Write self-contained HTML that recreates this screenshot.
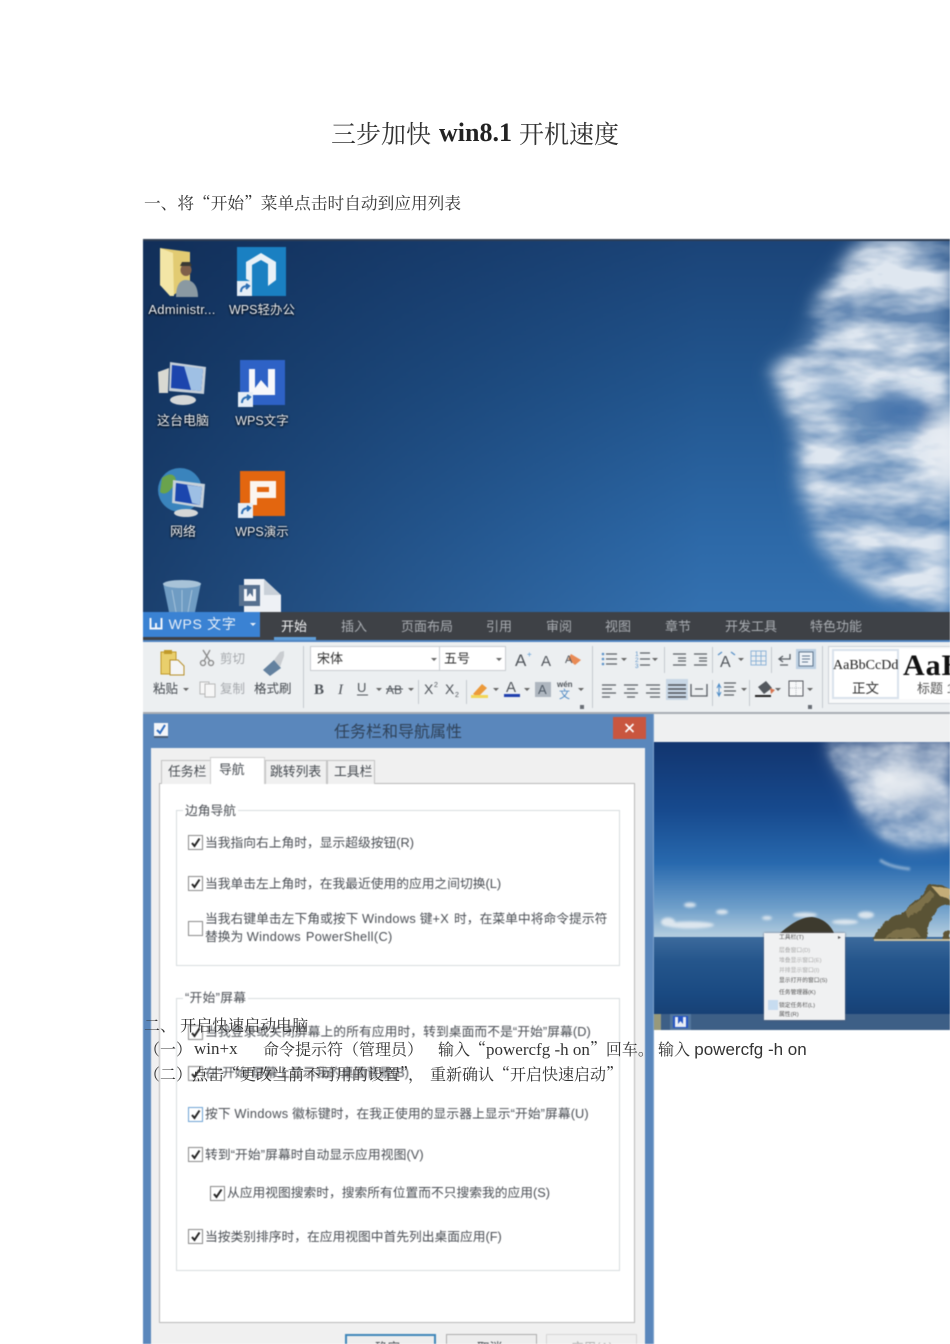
<!DOCTYPE html>
<html lang="zh"><head><meta charset="utf-8"><title>三步加快 win8.1 开机速度</title>
<style>
html,body{margin:0;padding:0;background:#fff}
#p{position:relative;width:950px;height:1344px;overflow:hidden;background:#fff}
#im{position:absolute;left:143px;top:239px;width:807px;height:1105px;overflow:hidden;filter:blur(.45px)}
.a{position:absolute}
.t{position:absolute;white-space:nowrap;font:13px/16px "Liberation Sans","Noto Sans CJK SC",sans-serif;color:#454a50}
.s{position:absolute;white-space:nowrap;font:17px/20px "Liberation Serif","Noto Serif CJK SC",serif;color:#333}
.q{font-family:"Noto Serif CJK SC",serif;font-size:16px}
.d{color:#eef1f5;text-align:center;width:90px;text-shadow:0 1px 2px #000,0 0 2px #0009}
.l{font-size:12.75px;color:#4b4f55}
.w{letter-spacing:.35px;word-spacing:1px}
.cb{position:absolute;width:13px;height:13px;border:1px solid #8b8b8b;background:#fff}
.cb svg{position:absolute;left:1px;top:1px}
.tab{position:absolute;background:#f0f0f0;border:1px solid #c4c4c4;border-bottom:0;box-sizing:border-box}
.sep{position:absolute;width:1px;background:#c5cacf}
.ar{position:absolute;width:0;height:0;border:3px solid transparent;border-top:3px solid #666;border-bottom:0}
.gb{position:absolute;left:33px;width:444px;border:1px solid #d8dcdf;box-sizing:border-box}
.bt{position:absolute;top:1095px;height:20px;width:91px;background:#ededed;border:1px solid #adadad;box-sizing:border-box}
</style></head><body><div id="p">
<div class="a" style="left:331px;top:116px;white-space:nowrap;font:25px/34px 'Noto Serif CJK SC',serif;color:#333">三步加快</div>
<div class="a" style="left:439px;top:116px;white-space:nowrap;font:bold 26px/34px 'Liberation Serif',serif;color:#222">win8.1</div>
<div class="a" style="left:519px;top:116px;white-space:nowrap;font:25px/34px 'Noto Serif CJK SC',serif;color:#333">开机速度</div>
<div class="s" style="left:144px;top:192px"><span class="q" style="font-size:16.700px">一、将“开始”菜单点击时自动到应用列表</span></div>

<div id="im">
<!-- Desktop wallpaper -->
<div class="a" style="left:0;top:0;width:807px;height:374px;background:linear-gradient(180deg,#1b4478 0,#22568f 40%,#2d69a8 80%,#3471b0 100%)"></div>
<div class="a" style="left:0;top:0;width:560px;height:374px;background:linear-gradient(90deg,rgba(12,34,70,.62) 0,rgba(12,34,70,.32) 45%,rgba(12,34,70,0) 100%)"></div>
<svg class="a" style="left:0;top:0" width="807" height="374" viewBox="143 239 807 374">
<defs>
<filter id="w" x="-30%" y="-30%" width="160%" height="160%" color-interpolation-filters="sRGB"><feTurbulence type="fractalNoise" baseFrequency=".012 .03" numOctaves="4" seed="11" result="n"/><feColorMatrix in="n" type="matrix" values="0 0 0 0 1 0 0 0 0 1 0 0 0 0 1 2.4 0 0 0 -.62" result="m"/><feGaussianBlur in="SourceGraphic" stdDeviation="8" result="b"/><feComposite in="b" in2="m" operator="in"/></filter>
<filter id="c2" x="-30%" y="-30%" width="160%" height="160%"><feGaussianBlur stdDeviation="9"/></filter>
<filter id="c4" x="-30%" y="-30%" width="160%" height="160%"><feGaussianBlur stdDeviation="12"/></filter>
<filter id="c3" x="-30%" y="-30%" width="160%" height="160%" color-interpolation-filters="sRGB"><feTurbulence type="fractalNoise" baseFrequency=".018 .03" numOctaves="4" seed="3" result="n"/><feColorMatrix in="n" type="matrix" values="0 0 0 0 1 0 0 0 0 1 0 0 0 0 1 2.4 0 0 0 -.55" result="m"/><feGaussianBlur in="SourceGraphic" stdDeviation="4" result="b"/><feComposite in="b" in2="m" operator="in"/></filter>
<filter id="r" x="-10%" y="-10%" width="120%" height="120%"><feTurbulence type="fractalNoise" baseFrequency=".12" numOctaves="3" seed="5" result="n"/><feDisplacementMap in="SourceGraphic" in2="n" scale="4"/></filter>
</defs>
<path d="M865 239H950V612L920 608L880 592L838 565L812 530L800 480L798 430L772 372L808 345L820 300L845 265Z" fill="#7e9fc6" opacity=".75" filter="url(#c4)"/>
<path d="M865 239H950V612L920 608L880 592L838 565L812 530L800 480L798 430L772 372L808 345L820 300L845 265Z" fill="#dfe7f0" filter="url(#w)"/>
<g filter="url(#c2)">
<ellipse cx="948" cy="450" rx="14" ry="46" fill="#eef1f5"/>
<ellipse cx="900" cy="412" rx="28" ry="18" fill="#4272aa" opacity=".85"/>
<ellipse cx="835" cy="392" rx="28" ry="8" fill="#5b88b9" opacity=".7"/>
</g>
</svg>
<div class="a" style="left:0;top:0;width:807px;height:2px;background:#2f3d52"></div>
<!-- Desktop icons -->
<svg class="a" style="left:0;top:0" width="170" height="374" viewBox="143 239 170 374">
<!-- folder -->
<path d="M160 248L190 252L190 284L172 296L160 285Z" fill="#e2cb72"/><path d="M160 248L173 253L174 296L170 296L160 285Z" fill="#f3e6a6"/>
<ellipse cx="186" cy="270" rx="5.500" ry="6" fill="#80604a"/><path d="M180 266H192L190 262H182Z" fill="#3a3a34"/><path d="M176 297C176 285 180 280 186 280C193 280 198 286 198 297Z" fill="#8a99a2"/>
<!-- wps office -->
<rect x="237" y="247" width="49" height="49" fill="#1a80c2"/><path d="M246 262L261 253L276 262L276 280L268 286L268 264L261 260L252 265L252 282L246 279Z" fill="#e9f1f7"/>
<!-- computer -->
<path d="M170 362L206 367L204 394L169 391Z" fill="#c4ced8"/><path d="M172 365L203 369L201 391L171 388Z" fill="#1c45ad"/><path d="M184 366L203 369L201 391L191 390Z" fill="#9fc0e4"/><path d="M158 372L169 368L168 393L159 393Z" fill="#d9d9d2"/><ellipse cx="183" cy="400" rx="13" ry="5" fill="#d5d7d7"/>
<!-- wps W -->
<rect x="240" y="360" width="45" height="45" fill="#2e62c6"/><path d="M249 369V395H275V369H268V388L261 380L255 388V369Z" fill="#f7f8fb"/>
<!-- globe -->
<circle cx="180" cy="490" r="22" fill="#3a84bd"/><path d="M162 478C170 472 176 474 176 482C170 492 165 496 160 492Z" fill="#6aa34c"/><path d="M173 480L205 484L203 508L172 503Z" fill="#c5d0da"/><path d="M176 483L202 487L200 505L175 501Z" fill="#1b46ae"/><path d="M187 485L202 487L200 505L192 503Z" fill="#9dbfe4"/><ellipse cx="186" cy="513" rx="12" ry="4" fill="#d5d7d7"/>
<!-- wps P -->
<rect x="240" y="471" width="45" height="45" fill="#e3660f"/><path d="M250 505V481H276V498H257V505Z" fill="#fbf5ef"/><rect x="257" y="487" width="12" height="5" fill="#e3660f"/>
<!-- recycle -->
<path d="M163 583L201 583L195 612L169 612Z" fill="#6f9cc3"/><ellipse cx="182" cy="584" rx="19" ry="4" fill="#a8c3d8"/><path d="M172 590L176 612M182 590V612M192 590L188 612" stroke="#a3c1da" stroke-width="1"/>
<!-- doc -->
<path d="M244 579H264L281 595V612H244Z" fill="#eef1f5"/><path d="M264 579L281 595H264Z" fill="#c9d0d8"/><rect x="239" y="585" width="21" height="21" fill="#56708f"/><path d="M244 589V601H256V589H253V597L250 593L247 597V589Z" fill="#f4f6f9"/>
<!-- shortcut badges -->
<g fill="#e6eef6"><rect x="237" y="281" width="15" height="15"/><rect x="238" y="392" width="15" height="15"/><rect x="238" y="503" width="15" height="15"/></g>
<g fill="none" stroke="#2c6fb5" stroke-width="2"><path d="M241 292C241 288 243 286 248 286M246 284L249 286L246 289"/><path d="M242 403C242 399 244 397 249 397M247 395L250 397L247 400"/><path d="M242 514C242 510 244 508 249 508M247 506L250 508L247 511"/></g>
</svg>
<div class="t d" style="left:-6px;top:63px;letter-spacing:.25px">Administr...</div>
<div class="t d" style="left:74px;top:63px;font-size:12.500px">WPS轻办公</div>
<div class="t d" style="left:-5px;top:174px">这台电脑</div>
<div class="t d" style="left:74px;top:174px;font-size:12.500px">WPS文字</div>
<div class="t d" style="left:-5px;top:285px">网络</div>
<div class="t d" style="left:74px;top:285px;font-size:12.500px">WPS演示</div>

<!-- dark tab bar -->
<div class="a" style="left:0;top:373px;width:807px;height:28px;background:#3e4146"></div>
<div class="a" style="left:0;top:373px;width:117px;height:25px;background:#3a82d3"></div>
<div class="t" style="left:6px;top:377px;font-size:14px;color:#eaf1f9;letter-spacing:.7px"><svg width="15" height="13" viewBox="0 0 15 13" style="vertical-align:-1px"><path d="M1.500 1V11.500H12.500V1M7 11V6" fill="none" stroke="#f2f6fb" stroke-width="2"/></svg> WPS 文字</div>
<div class="ar" style="left:107px;top:384px;border-top-color:#e8f0fa"></div>
<div class="t" style="left:138px;top:380px;color:#f0f1f2">开始</div>
<div class="t" style="left:198px;top:380px;color:#a9adb2">插入</div>
<div class="t" style="left:258px;top:380px;color:#a9adb2">页面布局</div>
<div class="t" style="left:343px;top:380px;color:#a9adb2">引用</div>
<div class="t" style="left:403px;top:380px;color:#a9adb2">审阅</div>
<div class="t" style="left:462px;top:380px;color:#a9adb2">视图</div>
<div class="t" style="left:522px;top:380px;color:#a9adb2">章节</div>
<div class="t" style="left:582px;top:380px;color:#a9adb2">开发工具</div>
<div class="t" style="left:667px;top:380px;color:#a9adb2">特色功能</div>
<div class="a" style="left:131px;top:398px;width:42px;height:3px;background:#5f9ed8"></div>

<!-- ribbon -->
<div class="a" style="left:0;top:401px;width:807px;height:74px;background:#eceff1;border-top:2px solid #4e84c2;border-bottom:2px solid #a8adb3;box-sizing:border-box"></div>
<svg class="a" style="left:0;top:401px" width="807" height="74" viewBox="143 640 807 74">
<!-- paste -->
<rect x="161" y="652" width="15" height="22" fill="#e9cf6c" stroke="#c19a2a"/><rect x="164" y="650" width="8" height="4" fill="#c19a2a"/><path d="M170 660H178L184 666V675H170Z" fill="#f4f5f6" stroke="#b68e28"/>
<!-- scissors -->
<g stroke="#888" fill="none" stroke-width="1.300"><circle cx="203" cy="663" r="2.500"/><circle cx="211" cy="663" r="2.500"/><path d="M204 661L210 650M210 661L203 650"/></g>
<!-- copy -->
<g stroke="#b8b8b8" fill="#f6f6f6"><rect x="200" y="682" width="9" height="12"/><rect x="205" y="684" width="10" height="13"/></g>
<!-- brush -->
<path d="M263 670L274 660L281 668L270 676Z" fill="#63819f"/><path d="M274 660L280 652L284 651L284 656L280 667Z" fill="#c9ccd0"/>
<!-- bold etc -->
<g font-family="Liberation Serif,serif" fill="#50555b"><text x="314" y="694" font-size="15" font-weight="bold">B</text><text x="338" y="694" font-size="15" font-style="italic">I</text></g>
<g font-family="Liberation Sans,sans-serif" fill="#50555b" font-size="13"><text x="357" y="692">U</text><text x="386" y="694" font-size="12">AB</text><text x="424" y="694" font-size="14">X</text><text x="434" y="687" font-size="7">2</text><text x="445" y="694" font-size="14">X</text><text x="455" y="697" font-size="7">2</text><text x="515" y="666" font-size="17">A</text><text x="527" y="657" font-size="8" fill="#5a9bd5">+</text><text x="541" y="666" font-size="15">A</text></g>
<path d="M357 695H368M386 689H403" stroke="#50555b" stroke-width="1"/>
<!-- eraser -->
<path d="M571 654L581 660L575 665L568 659Z" fill="#e98b56"/><text x="565" y="663" font-family="Liberation Sans,sans-serif" font-size="11" fill="#50555b">A</text>
<!-- highlight -->
<path d="M473 694L482 684L487 688L478 697Z" fill="#ec9a3a"/><rect x="471" y="695" width="17" height="3" fill="#f2d657"/>
<text x="506" y="692" font-family="Liberation Sans,sans-serif" font-size="15" fill="#50555b">A</text><rect x="504" y="694" width="16" height="3" fill="#1f3fae"/>
<rect x="535" y="682" width="16" height="15" fill="#aeb6bf"/><text x="538" y="694" font-family="Liberation Sans,sans-serif" font-size="13" fill="#4f5a66">A</text>
<text x="557" y="687" font-family="Liberation Sans,sans-serif" font-size="8" font-weight="bold" fill="#50555b">wén</text><text x="559" y="698" font-family="Noto Sans CJK SC,sans-serif" font-size="11" fill="#4a86c2">文</text>
<!-- list icons -->
<g stroke="#5b6066" stroke-width="1.300" fill="none">
<path d="M606 654H617M606 659H617M606 664H617M640 653H650M640 659H650M640 665H650"/>
<path d="M673 654H686M678 658H686M678 661H686M673 665H686M694 654H707M699 658H707M699 661H707M694 665H707"/>
<path d="M602 685H616M602 689H612M602 693H616M602 697H610"/>
<path d="M624 685H638M627 689H635M624 693H638M627 697H635"/>
<path d="M646 685H660M650 689H660M646 693H660M650 697H660"/>
<path d="M691 684V696H707V684M693 696H705M695 689H703"/>
<path d="M724 683H736M724 687H734M724 691H736M724 695H734"/>
<path d="M779 659H790V654M783 656L779 659L783 662M780 665H788"/>
</g>
<rect x="666" y="679" width="22" height="21" fill="#bccfe2" opacity=".75"/>
<path d="M668 685H686M668 689H686M668 693H686M668 697H686" stroke="#4e535a" stroke-width="1.500"/>
<g fill="#5d93c9"><circle cx="603" cy="654" r="1.300"/><circle cx="603" cy="659" r="1.300"/><circle cx="603" cy="664" r="1.300"/></g>
<g font-family="Liberation Sans,sans-serif" font-size="6.500" fill="#5d93c9"><text x="635" y="656">1</text><text x="635" y="662">2</text><text x="635" y="668">3</text></g>
<path d="M721 688L719 684L717 688M719 684V696M717 692L719 696L721 692" stroke="#4f8dc8" fill="none"/>
<text x="720" y="667" font-family="Liberation Sans,sans-serif" font-size="16" fill="#50555b">A</text>
<path d="M718 655L722 652M735 655L731 652" stroke="#5d93c9" stroke-width="1.400"/>
<g stroke="#8fb5d8" fill="none"><rect x="751" y="651" width="15" height="14"/><path d="M756 651V665M761 651V665M751 656H766M751 661H766"/></g>
<rect x="796" y="649" width="20" height="20" fill="#bccfe2"/><rect x="799" y="652" width="14" height="14" fill="#eef3f8" stroke="#60778f"/><path d="M802 656H810M802 659H810M802 662H808" stroke="#60778f"/>
<path d="M758 687L766 681L772 688L764 694Z" fill="#53585e"/><path d="M770 688L775 690L771 694Z" fill="#d6744f"/><rect x="755" y="695" width="16" height="2" fill="#222"/>
<rect x="789" y="681" width="14" height="15" fill="#f7f8f9" stroke="#55595f"/><path d="M796 682V695M790 688H802" stroke="#b4b8bd" stroke-dasharray="1 1"/>
<g fill="#6a6f76"><rect x="580" y="705" width="4" height="4"/><rect x="808" y="705" width="4" height="4"/></g>
</svg>
<div class="sep" style="left:160px;top:407px;height:62px"></div>
<div class="sep" style="left:275px;top:441px;height:24px"></div>
<div class="sep" style="left:323px;top:441px;height:24px"></div>
<div class="sep" style="left:449px;top:407px;height:62px"></div>
<div class="sep" style="left:521px;top:408px;height:26px"></div>
<div class="sep" style="left:569px;top:408px;height:26px"></div>
<div class="sep" style="left:628px;top:408px;height:26px"></div>
<div class="sep" style="left:569px;top:441px;height:26px"></div>
<div class="sep" style="left:606px;top:441px;height:26px"></div>
<div class="sep" style="left:679px;top:407px;height:62px"></div>
<div class="t" style="left:10px;top:442px;font-size:12.500px">粘贴</div>
<div class="ar" style="left:40px;top:449px"></div>
<div class="t" style="left:77px;top:412px;font-size:12.500px;color:#a6a9ad">剪切</div>
<div class="t" style="left:77px;top:442px;font-size:12.500px;color:#a6a9ad">复制</div>
<div class="t" style="left:111px;top:442px;font-size:12.500px">格式刷</div>
<div class="a" style="left:167px;top:407px;width:196px;height:25px;background:#fff;border:1px solid #c9cdd1;box-sizing:border-box"></div>
<div class="a" style="left:296px;top:407px;width:1px;height:25px;background:#c9cdd1"></div>
<div class="t" style="left:174px;top:412px;color:#333">宋体</div>
<div class="t" style="left:301px;top:412px;color:#333">五号</div>
<div class="ar" style="left:288px;top:419px"></div>
<div class="ar" style="left:353px;top:419px"></div>
<div class="ar" style="left:233px;top:449px"></div>
<div class="ar" style="left:265px;top:449px"></div>
<div class="ar" style="left:350px;top:449px"></div>
<div class="ar" style="left:381px;top:449px"></div>
<div class="ar" style="left:435px;top:449px"></div>
<div class="ar" style="left:478px;top:419px"></div>
<div class="ar" style="left:509px;top:419px"></div>
<div class="ar" style="left:595px;top:419px"></div>
<div class="ar" style="left:598px;top:449px"></div>
<div class="ar" style="left:632px;top:449px"></div>
<div class="ar" style="left:664px;top:449px"></div>
<!-- styles gallery -->
<div class="a" style="left:685px;top:407px;width:122px;height:58px;background:#f8f9fa;border:1px solid #cdd2d7;border-right:0;box-sizing:border-box"></div>
<div class="a" style="left:689px;top:410px;width:67px;height:50px;background:#fff;border:2px solid #d9e2ec;box-sizing:border-box"></div>
<div class="a" style="left:756px;top:410px;width:51px;height:50px;background:#fff"></div>
<div class="a" style="left:690px;top:418px;width:65px;overflow:hidden;white-space:nowrap;font:14px/18px 'Liberation Serif',serif;color:#222">AaBbCcDd</div>
<div class="t" style="left:709px;top:442px;color:#333;font-size:13.500px">正文</div>
<div class="a" style="left:760px;top:411px;white-space:nowrap;font:bold 30px/32px 'Liberation Serif',serif;color:#111;letter-spacing:1px">AaB</div>
<div class="t" style="left:774px;top:442px;color:#555;font-size:13px">标题 1</div>

<!-- right gray strip -->
<div class="a" style="left:510px;top:475px;width:297px;height:28px;background:#eff0f1"></div>
<!-- photo -->
<div class="a" style="left:510px;top:503px;width:297px;height:195px;background:linear-gradient(180deg,#12356f 0,#174a8e 35%,#2869ae 62%,#6f9fca 85%,#b6cfe0 100%)"></div>
<div class="a" style="left:510px;top:698px;width:297px;height:93px;background:linear-gradient(180deg,#3c6a9c 0,#25568c 25%,#1a4a82 60%,#153a6c 100%)"></div>
<div class="a" style="left:510px;top:775px;width:297px;height:16px;background:#3d5f86"></div>
<svg class="a" style="left:510px;top:503px" width="297" height="288" viewBox="653 742 297 288">
<path d="M825 742H950V845L905 848L880 835L860 815L850 790L835 765Z" fill="#a8bcd4" opacity=".55" filter="url(#c2)"/>
<path d="M825 742H950V845L905 848L880 835L860 815L850 790L835 765Z" fill="#e8edf3" opacity=".8" filter="url(#c3)"/>
<g filter="url(#c2)"><ellipse cx="905" cy="785" rx="32" ry="18" fill="#f2f4f6" opacity=".9"/><ellipse cx="945" cy="815" rx="22" ry="10" fill="#e3e8ee" opacity=".8"/></g>
<path d="M880 860C888 866 900 868 910 869" stroke="#c9d8e6" stroke-width="3" fill="none" opacity=".6" style="filter:blur(1px)"/>
<g fill="#eaeff3" opacity=".85" style="filter:blur(1.200px)"><ellipse cx="690" cy="925" rx="24" ry="3.500"/><ellipse cx="668" cy="922" rx="7" ry="4.500"/><ellipse cx="866" cy="915" rx="8" ry="3.500"/><ellipse cx="690" cy="905" rx="6" ry="2.500"/><ellipse cx="722" cy="912" rx="6" ry="2.500"/><ellipse cx="845" cy="922" rx="13" ry="2.500"/><ellipse cx="805" cy="915" rx="12" ry="2.500"/><ellipse cx="767" cy="918" rx="5" ry="2"/></g>
<path d="M780 933C790 925 800 917 812 917C822 918 830 924 834 933Z" fill="#3d3a2e"/>
<g filter="url(#r)">
<path d="M874 940C877 928 885 920 898 915C910 905 922 899 929 884L940 885L950 889V905C940 904 933 912 929 926L926 940Z" fill="#5a5236"/>
<path d="M931 886L950 889V900L940 896Z" fill="#c4ad78"/>
<path d="M884 938C890 932 902 926 914 928L922 938Z" fill="#7c7048"/>
<path d="M905 910C915 905 922 898 930 890L935 895C925 905 918 912 908 918Z" fill="#7c7048"/>
<path d="M941 940C943 932 947 930 950 930V940Z" fill="#5e5436"/>
</g>
<rect x="874" y="939" width="76" height="2" fill="#c9c0a0"/>
<rect x="670" y="1014" width="21" height="16" fill="#5a7ea4" opacity=".75"/><rect x="673" y="1016" width="15" height="12" fill="#2555c4"/><path d="M675 1017V1027H686V1017H683V1024L680.500 1021L678 1024V1017Z" fill="#e9eef5"/>
<path d="M653 1014h8v16h-8z" fill="#c7b974" opacity=".65"/>
</svg>
<!-- context menu -->
<div class="a" style="left:621px;top:694px;width:81px;height:87px;background:#f0f1f2;box-shadow:0 0 2px #667"></div>
<div class="a" style="left:621px;top:694px;width:81px;height:87px;font:5.800px/7px 'Liberation Sans','Noto Sans CJK SC',sans-serif;color:#555">
<span class="a" style="left:15px;top:2px;white-space:nowrap">工具栏(T)</span><span class="a" style="left:74px;top:2px">▸</span>
<span class="a" style="left:15px;top:15px;color:#aaa;white-space:nowrap">层叠窗口(D)</span>
<span class="a" style="left:15px;top:25px;color:#aaa;white-space:nowrap">堆叠显示窗口(E)</span>
<span class="a" style="left:15px;top:35px;color:#aaa;white-space:nowrap">并排显示窗口(I)</span>
<span class="a" style="left:15px;top:45px;white-space:nowrap">显示打开的窗口(S)</span>
<span class="a" style="left:15px;top:57px;white-space:nowrap">任务管理器(K)</span>
<span class="a" style="left:15px;top:70px;white-space:nowrap">锁定任务栏(L)</span>
<span class="a" style="left:15px;top:79px;white-space:nowrap">属性(R)</span>
<span class="a" style="left:4px;top:67px;width:10px;height:10px;background:#c7dcf0"></span>
</div>

<!-- dialog -->
<div class="a" style="left:0;top:475px;width:510px;height:630px;background:#5a87bc"></div>
<div class="a" style="left:8px;top:509px;width:494px;height:596px;background:#f0f0f0"></div>
<div class="a" style="left:11px;top:484px;width:14px;height:13px;background:#f4f6f9;box-shadow:0 2px 0 #4a5f78"><svg width="14" height="13" style="display:block"><path d="M3 7L6 10L11 2" stroke="#2e6cc0" stroke-width="2" fill="none"/></svg></div>
<div class="t" style="left:191px;top:485px;font-size:16px;line-height:18px;color:#2f4259">任务栏和导航属性</div>
<div class="a" style="left:470px;top:478px;width:33px;height:22px;background:#c9563f"></div>
<svg class="a" style="left:481px;top:484px" width="11" height="10"><path d="M1.500 1L9.500 9M9.500 1L1.500 9" stroke="#fff" stroke-width="1.600"/></svg>
<!-- panel -->
<div class="a" style="left:16px;top:544px;width:476px;height:540px;background:#fff;border:1px solid #b9b9b9;box-sizing:border-box"></div>
<div class="tab" style="left:18px;top:521px;width:50px;height:24px"></div>
<div class="tab" style="left:122px;top:521px;width:62px;height:24px"></div>
<div class="tab" style="left:184px;top:521px;width:48px;height:24px"></div>
<div class="tab" style="left:67px;top:518px;width:55px;height:27px;background:#fff;border-color:#d0d0d0"></div>
<div class="t" style="left:25px;top:525px;font-size:12.800px">任务栏</div>
<div class="t" style="left:76px;top:523px;font-size:12.800px">导航</div>
<div class="t" style="left:127px;top:525px;font-size:12.800px">跳转列表</div>
<div class="t" style="left:191px;top:525px;font-size:12.800px">工具栏</div>
<!-- group 1 -->
<div class="gb" style="top:571px;height:156px"></div>
<div class="t l" style="left:40px;top:564px;background:#fff;padding:0 2px">边角导航</div>
<div class="cb" style="left:45px;top:596px"><svg width="11" height="11"><path d="M2 6L4.500 9L9.500 1.500" stroke="#222" stroke-width="2" fill="none"/></svg></div>
<div class="t l" style="left:62px;top:596px">当我指向右上角时，显示超级按钮(R)</div>
<div class="cb" style="left:45px;top:637px"><svg width="11" height="11"><path d="M2 6L4.500 9L9.500 1.500" stroke="#222" stroke-width="2" fill="none"/></svg></div>
<div class="t l" style="left:62px;top:637px">当我单击左上角时，在我最近使用的应用之间切换(L)</div>
<div class="cb" style="left:45px;top:682px"></div>
<div class="t l" style="left:62px;top:672px;letter-spacing:.03px">当我右键单击左下角或按下 <span class="w">Windows</span> 键<span class="w">+X </span>时，在菜单中将命令提示符</div>
<div class="t l" style="left:62px;top:690px">替换为 <span class="w">Windows PowerShell(C)</span></div>
<!-- group 2 -->
<div class="gb" style="top:759px;height:273px"></div>
<div class="t l" style="left:40px;top:751px;background:#fff;padding:0 2px;letter-spacing:.3px">“开始”屏幕</div>
<div class="cb" style="left:45px;top:786px"><svg width="11" height="11"><path d="M2 6L4.500 9L9.500 1.500" stroke="#222" stroke-width="2" fill="none"/></svg></div>
<div class="t l" style="left:62px;top:785px;letter-spacing:.08px">当我登录或关闭屏幕上的所有应用时，转到桌面而不是“开始”屏幕(D)</div>
<div class="cb" style="left:45px;top:827px"><svg width="11" height="11"><path d="M2 6L4.500 9L9.500 1.500" stroke="#222" stroke-width="2" fill="none"/></svg></div>
<div class="t l" style="left:62px;top:826px">在“开始”屏幕上显示我的桌面背景(B)</div>
<div class="cb" style="left:45px;top:868px;border-color:#6ea3d4"><svg width="11" height="11"><path d="M2 6L4.500 9L9.500 1.500" stroke="#222" stroke-width="2" fill="none"/></svg></div>
<div class="t l" style="left:62px;top:867px;letter-spacing:.1px">按下 <span class="w">Windows</span> 徽标键时，在我正使用的显示器上显示“开始”屏幕(U)</div>
<div class="cb" style="left:45px;top:908px"><svg width="11" height="11"><path d="M2 6L4.500 9L9.500 1.500" stroke="#222" stroke-width="2" fill="none"/></svg></div>
<div class="t l" style="left:62px;top:908px;letter-spacing:.1px">转到“开始”屏幕时自动显示应用视图(V)</div>
<div class="cb" style="left:67px;top:947px"><svg width="11" height="11"><path d="M2 6L4.500 9L9.500 1.500" stroke="#222" stroke-width="2" fill="none"/></svg></div>
<div class="t l" style="left:84px;top:946px">从应用视图搜索时，搜索所有位置而不只搜索我的应用(S)</div>
<div class="cb" style="left:45px;top:990px"><svg width="11" height="11"><path d="M2 6L4.500 9L9.500 1.500" stroke="#222" stroke-width="2" fill="none"/></svg></div>
<div class="t l" style="left:62px;top:990px">当按类别排序时，在应用视图中首先列出桌面应用(F)</div>
<!-- buttons -->
<div class="bt" style="left:202px;border:2px solid #3f86b9"><span class="t" style="left:28px;top:4px;font-size:12.600px">确定</span></div>
<div class="bt" style="left:303px"><span class="t" style="left:30px;top:5px;font-size:12.600px">取消</span></div>
<div class="bt" style="left:403px;background:#efefef;border-color:#d6d6d6"><span class="t" style="left:24px;top:5px;font-size:12.600px;color:#aaa">应用(A)</span></div>
<!-- white below photo -->
<div class="a" style="left:510px;top:791px;width:297px;height:314px;background:#fff"></div>
<div class="a" style="left:510px;top:475px;width:1px;height:630px;background:#7aa0cb"></div>
</div>

<!-- overlaid document text -->
<div class="s" style="left:144px;top:1015px"><span class="q">二、 开启快速启动电脑</span></div>
<div class="s" style="left:144px;top:1039px"><span class="q">（一）</span></div>
<div class="s" style="left:194px;top:1039px">win+x</div>
<div class="s" style="left:263px;top:1039px"><span class="q">命令提示符（管理员）</span></div>
<div class="s" style="left:438px;top:1039px"><span class="q">输入“</span>powercfg -h on<span class="q">”回车。</span></div>
<div class="s" style="left:658px;top:1039px"><span class="q">输入</span> <span style="font-family:'Liberation Sans',sans-serif">powercfg -h on</span></div>
<div class="s" style="left:144px;top:1064px"><span class="q">（二）点击“更改当前不可用的设置”，</span></div>
<div class="s" style="left:430px;top:1064px"><span class="q">重新确认“开启快速启动”</span></div>
</div></body></html>
